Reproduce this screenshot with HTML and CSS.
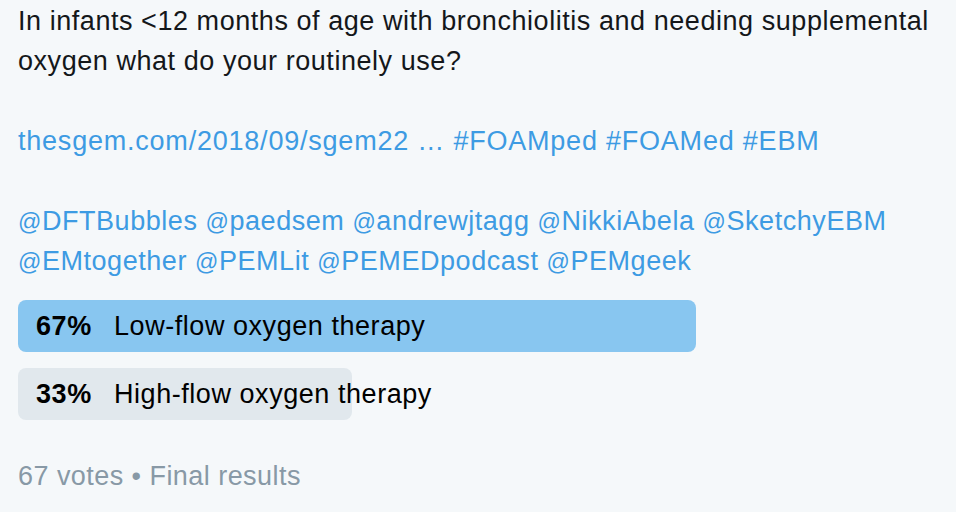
FILE: index.html
```html
<!DOCTYPE html>
<html>
<head>
<meta charset="utf-8">
<link rel="stylesheet" href="styles.css">
</head>
<body>
<div class="tweet">
  <p class="text">In infants &lt;12 months of age with bronchiolitis and needing supplemental<br>oxygen what do your routinely use?<br><br><span class="wide"><a class="link">thesgem.com/2018/09/sgem22 …</a> <a class="link">#FOAMped</a> <a class="link">#FOAMed</a> <a class="link">#EBM</a></span><br><br><a class="link"><span class="at">@</span>DFTBubbles</a> <a class="link"><span class="at">@</span>paedsem</a> <a class="link"><span class="at">@</span>andrewjtagg</a> <a class="link"><span class="at">@</span>NikkiAbela</a> <a class="link"><span class="at">@</span>SketchyEBM</a><br><a class="link"><span class="at">@</span>EMtogether</a> <a class="link"><span class="at">@</span>PEMLit</a> <a class="link"><span class="at">@</span>PEMEDpodcast</a> <a class="link"><span class="at">@</span>PEMgeek</a></p>
  <div class="poll">
    <div class="choice">
      <div class="bar bar-win" style="width: 678px"></div>
      <span class="pct">67%</span><span class="label">Low-flow oxygen therapy</span>
    </div>
    <div class="choice">
      <div class="bar bar-lose" style="width: 334px"></div>
      <span class="pct">33%</span><span class="label">High-flow oxygen therapy</span>
    </div>
  </div>
  <div class="meta">67 votes • Final results</div>
</div>
</body>
</html>
```
FILE: styles.css
```css
html, body {
  margin: 0;
  padding: 0;
  background: #f5f8fa;
}
body {
  font-family: "Liberation Sans", Arial, sans-serif;
  color: #14171a;
}
.tweet {
  padding: 1px 0 0 18px;
}
.text {
  margin: 0;
  font-size: 27px;
  letter-spacing: 0.55px;
  line-height: 40px;
  white-space: nowrap;
}
.wide {
  letter-spacing: 0.78px;
}
.link {
  color: #3d9be3;
  text-decoration: none;
}
.at {
  font-size: 23px;
  line-height: 0;
}
.poll {
  margin-top: 19px;
  display: flex;
  flex-direction: column;
  gap: 16px;
}
.choice {
  position: relative;
  height: 52px;
  display: flex;
  align-items: center;
  font-size: 27px;
  letter-spacing: 0.55px;
  color: #000;
}
.bar {
  position: absolute;
  left: 0;
  top: 0;
  bottom: 0;
  border-radius: 8px;
}
.bar-win { background: #88c6f0; }
.bar-lose { background: #e1e8ed; }
.pct {
  position: relative;
  font-weight: bold;
  padding-left: 18px;
  width: 78px;
}
.label {
  position: relative;
}
.meta {
  margin-top: 36px;
  font-size: 27px;
  line-height: 40px;
  letter-spacing: 0.45px;
  color: #8899a6;
}
```
